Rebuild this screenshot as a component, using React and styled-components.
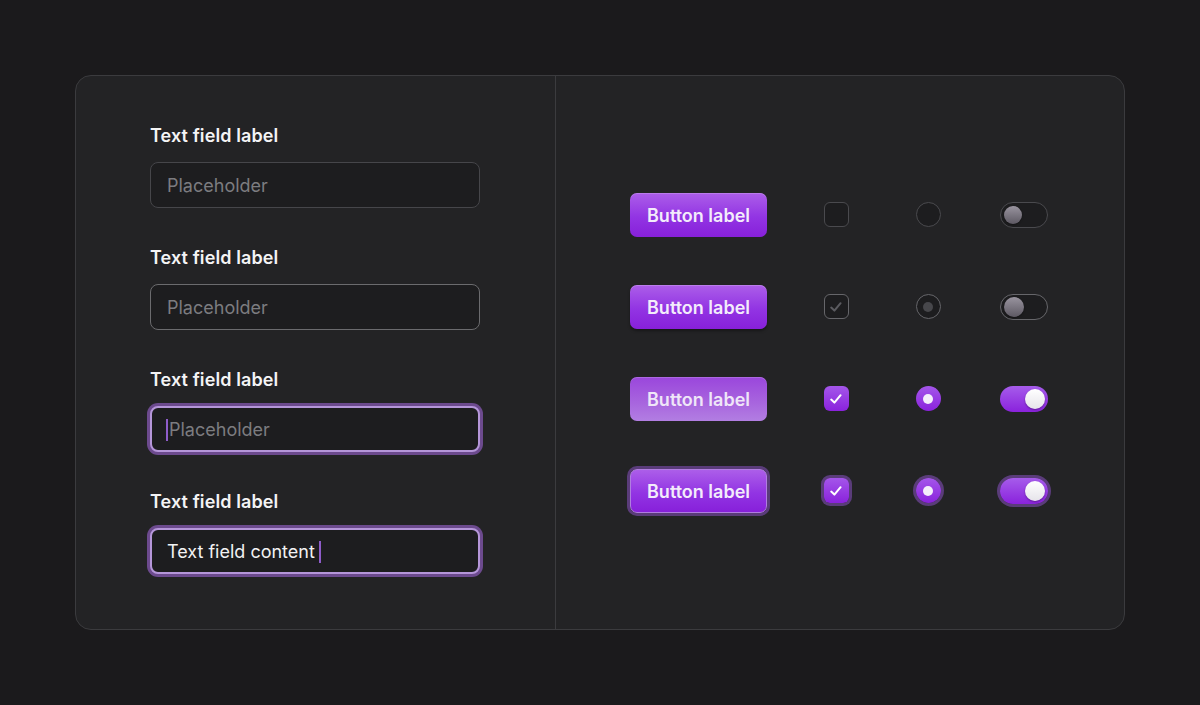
import React from "react";
import styled, { createGlobalStyle, css } from "styled-components";

const Global = createGlobalStyle`
  html, body {
    margin: 0;
    background: #1b1a1c;
    font-family: "Inter", "Lato", sans-serif;
    -webkit-font-smoothing: antialiased;
  }
`;

const Page = styled.div`
  width: 1200px;
  height: 705px;
  box-sizing: border-box;
  padding: 75px;
  background: #1b1a1c;
`;

const Panel = styled.div`
  display: grid;
  grid-template-columns: 480px 1fr;
  height: 555px;
  box-sizing: border-box;
  background: #232325;
  border: 1px solid #3b3b3e;
  border-radius: 16px;
  overflow: hidden;
`;

const FieldColumn = styled.div`
  display: flex;
  flex-direction: column;
  gap: 38px;
  padding: 48px 0 0 74px;
  border-right: 1px solid #3b3b3e;
`;

const Field = styled.div`
  display: flex;
  flex-direction: column;
  gap: 15px;
`;

const Label = styled.div`
  color: #f4f4f5;
  font-size: 18px;
  font-weight: 600;
  line-height: 23px;
  letter-spacing: 0.1px;
`;

const Input = styled.div`
  display: flex;
  align-items: center;
  width: 330px;
  height: 46px;
  box-sizing: border-box;
  padding: 1px 16px 0;
  border-radius: 8px;
  background: #1d1d1f;
  border: 1px solid ${(p) => (p.hover ? "#6b6b6e" : "#46464a")};
  font-size: 18px;
  color: ${(p) => (p.filled ? "#f2f2f3" : "#7c7c80")};
  ${(p) =>
    p.focus &&
    css`
      border: 2px solid #b596d9;
      padding: 1px 15px 0;
      box-shadow: 0 0 0 3px #6c4a8e;
    `}
`;

const Caret = styled.span`
  display: inline-block;
  width: 2px;
  height: 22px;
  background: #8e5cc9;
  margin: ${(p) => (p.after ? "0 0 0 4px" : "0 1px 0 -1px")};
`;

const ControlColumn = styled.div`
  display: grid;
  grid-template-columns: 160px 92px 92px 100px;
  grid-auto-rows: 44px;
  row-gap: 48px;
  align-content: center;
  align-items: center;
  justify-items: center;
  padding-left: 74px;
`;

const ring = css`
  box-shadow: 0 0 0 3px #5a3c7a;
`;

const Button = styled.div`
  justify-self: start;
  display: flex;
  align-items: center;
  justify-content: center;
  width: 137px;
  height: 44px;
  box-sizing: border-box;
  padding-top: 1px;
  border-radius: 7px;
  color: #f3ecfb;
  font-size: 18px;
  font-weight: 600;
  background: linear-gradient(180deg, #ac5ee9 0%, #9234e3 55%, #8720da 100%);
  box-shadow: inset 0 1px 0 rgba(255, 255, 255, 0.18);
  ${(p) =>
    p.state === "disabled" &&
    css`
      background: linear-gradient(180deg, #9a46dc 0%, #a866de 60%, #b27ee2 100%);
      color: #efe6f8;
    `}
  ${(p) =>
    p.state === "focus" &&
    css`
      border: 1px solid #b07ee0;
      box-shadow: 0 0 0 3px #5a3c7a;
    `}
  ${(p) =>
    p.state === "hover" &&
    css`
      box-shadow: inset 0 1px 0 rgba(255, 255, 255, 0.2), 0 2px 3px rgba(0, 0, 0, 0.35);
    `}
`;

const Check = styled.div`
  display: flex;
  align-items: center;
  justify-content: center;
  width: 25px;
  height: 25px;
  box-sizing: border-box;
  border-radius: 6px;
  background: #1d1d1f;
  border: 1px solid ${(p) => (p.hover ? "#66666a" : "#4a4a4e")};
  ${(p) =>
    p.on &&
    css`
      border: none;
      background: linear-gradient(180deg, #a456ea 0%, #8a22dc 100%);
    `}
  ${(p) => p.focus && ring}
`;

const Radio = styled.div`
  display: flex;
  align-items: center;
  justify-content: center;
  width: 25px;
  height: 25px;
  box-sizing: border-box;
  border-radius: 50%;
  background: #1d1d1f;
  border: 1px solid ${(p) => (p.hover ? "#66666a" : "#4a4a4e")};
  ${(p) =>
    p.on &&
    css`
      border: none;
      background: linear-gradient(180deg, #a456ea 0%, #8a22dc 100%);
    `}
  ${(p) => p.focus && ring}
`;

const Dot = styled.span`
  width: 10px;
  height: 10px;
  border-radius: 50%;
  background: ${(p) => (p.on ? "#f4eefb" : "#47474b")};
`;

const Toggle = styled.div`
  justify-self: start;
  margin-left: 26px;
  display: flex;
  align-items: center;
  justify-content: ${(p) => (p.on ? "flex-end" : "flex-start")};
  width: 48px;
  height: 26px;
  box-sizing: border-box;
  padding: 0 3px;
  border-radius: 13px;
  background: #1d1d1f;
  border: 1px solid ${(p) => (p.hover ? "#66666a" : "#4a4a4e")};
  ${(p) =>
    p.on &&
    css`
      border: none;
      padding: 0 3px;
      background: linear-gradient(180deg, #a65ceb 0%, #8a22dc 100%);
    `}
  ${(p) => p.focus && ring}
`;

const Knob = styled.span`
  width: ${(p) => (p.on || p.hover ? 20 : 18)}px;
  height: ${(p) => (p.on || p.hover ? 20 : 18)}px;
  border-radius: 50%;
  background: ${(p) =>
    p.on
      ? "linear-gradient(180deg, #ffffff 0%, #e6e4ea 100%)"
      : "linear-gradient(180deg, #99949f 0%, #5d5963 100%)"};
  box-shadow: 0 1px 2px rgba(0, 0, 0, 0.35);
`;

const Tick = ({ color }) => (
  <svg width="16" height="16" viewBox="0 0 16 16" fill="none">
    <path
      d="M3.2 8.6 L6.4 11.6 L12.6 4.2"
      stroke={color}
      strokeWidth="2"
      strokeLinecap="round"
      strokeLinejoin="round"
    />
  </svg>
);

const rows = [
  { state: "default" },
  { state: "hover", hover: true },
  { state: "disabled", on: true },
  { state: "focus", on: true, focus: true },
];

export default function App() {
  return (
    <Page>
      <Global />
      <Panel>
        <FieldColumn>
          <Field>
            <Label>Text field label</Label>
            <Input>Placeholder</Input>
          </Field>
          <Field>
            <Label>Text field label</Label>
            <Input hover>Placeholder</Input>
          </Field>
          <Field>
            <Label>Text field label</Label>
            <Input focus>
              <Caret />
              Placeholder
            </Input>
          </Field>
          <Field>
            <Label>Text field label</Label>
            <Input focus filled>
              Text field content
              <Caret after />
            </Input>
          </Field>
        </FieldColumn>
        <ControlColumn>
          {rows.map((r) => (
            <React.Fragment key={r.state}>
              <Button state={r.state}>Button label</Button>
              <Check on={r.on} hover={r.hover} focus={r.focus}>
                {r.on && <Tick color="#ffffff" />}
                {r.hover && <Tick color="#5b5b60" />}
              </Check>
              <Radio on={r.on} hover={r.hover} focus={r.focus}>
                {(r.on || r.hover) && <Dot on={r.on} />}
              </Radio>
              <Toggle on={r.on} hover={r.hover} focus={r.focus}>
                <Knob on={r.on} hover={r.hover} />
              </Toggle>
            </React.Fragment>
          ))}
        </ControlColumn>
      </Panel>
    </Page>
  );
}
